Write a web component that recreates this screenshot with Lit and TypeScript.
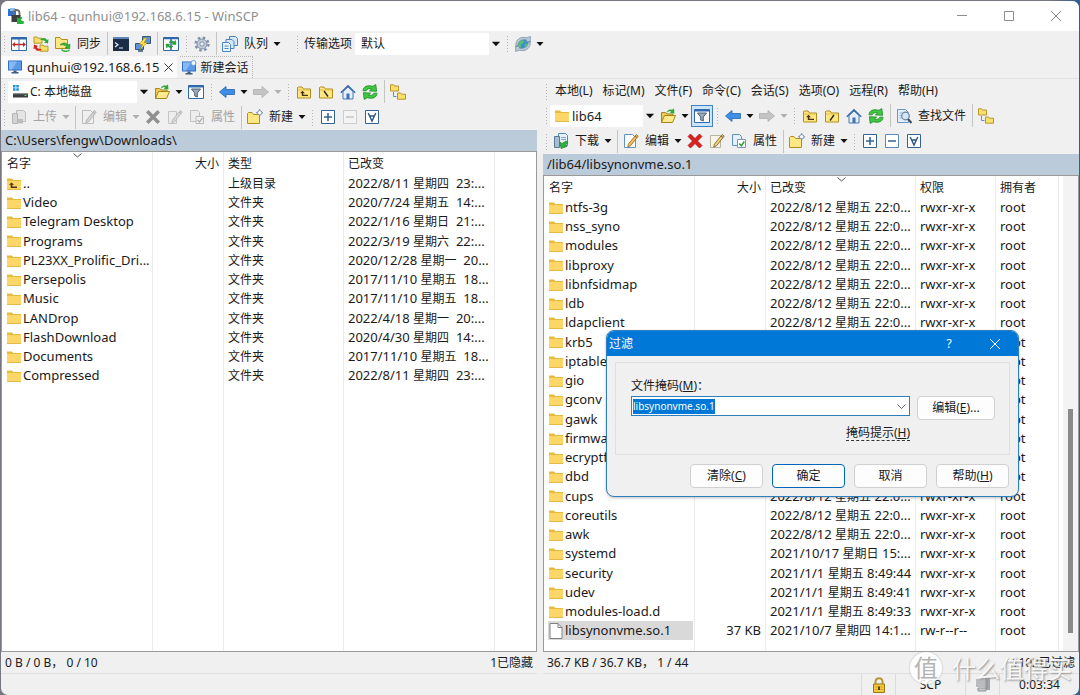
import { LitElement, html, svg, css, nothing, TemplateResult } from "lit";
import { customElement, property, query } from "lit/decorators.js";
import { classMap } from "lit/directives/class-map.js";

const folder = svg`<path d="M1 2.500h5l1.300 1.500H15v10H1z" fill="#e9b93c"/><path d="M1 5h14v9H1z" fill="#fcd667"/><path d="M1 13h14v1H1z" fill="#e8b84a"/>`;
const goldFolder = svg`<path d="M1.500 3.500v10.500h13v-9h-7l-1.500-2h-3.500z" fill="#ffe783" stroke="#b08d1e"/><path d="M2 6h12" stroke="#e3bd4a"/>`;
const smallFolder = (x: number, y: number) => svg`<path d="M${x} ${y}h3l1 1.200h4v5H${x}z" fill="#fbdf6b" stroke="#b08d1e" stroke-width=".9"/>`;
const sheet = (stroke: string, fill: string) => svg`<path d="M1.500 1.500h8l3 3v10h-11z" fill=${fill} stroke=${stroke}/>`;
const pencil = (body: string, dark: string) => svg`<path d="M13.200 1.500l2 1.600-7.600 9.600-2.800 1.400.6-3z" fill=${body} stroke=${dark} stroke-width=".8"/><path d="M12 3l2.200 1.700" stroke=${dark}/>`;
const monitor = svg`<path d="M1 1.500h14v10H1z" fill="#2f6fc4"/><path d="M2 2.500h12v8H2z" fill="#5b9ae6"/><path d="M2 2.500h8l-5 8H2z" fill="#86b8f2"/><path d="M6.500 11.500h3V13h2v1.500h-7V13h2z" fill="#41597a"/>`;
const boxed = (stroke: string, fill: string) => svg`<path d="M1.500 1.500h13v13h-13z" fill=${fill} stroke=${stroke}/>`;
const refreshHalf = svg`<path d="M1 6.800C1.300 2.500 5 .8 10.800 2.300L13.800.6 14.600 7.300 7.400 6.900 9.600 5C7 4.200 5 4.700 4.200 6.800z" fill="#43c644" stroke="#158a22" stroke-width=".8"/>`;

const ICONS: Record<string, TemplateResult> = {
  app: svg`<path d="M0 1h8v7H0z" fill="#2f6fd0"/><path d="M2 0h5v3H2z" fill="#8dc0f5"/><path d="M5.500 8V5c0-4 6-4 6 0v3" fill="none" stroke="#6d6d6d" stroke-width="1.800"/><path d="M3.500 7h9v7h-9z" fill="#3d3d3d"/><path d="M9 9l1.800 1.500L13 8.500l1.500 1.500-2 2L16 13.500 15.500 16H9z" fill="#22b53a"/>`,
  compare: svg`<path d="M.5 1.500h15v13H.5z" fill="#fff" stroke="#2f68ab"/><path d="M.5 2.500h15" stroke="#2f68ab" stroke-width="2"/><path d="M8 3v11" stroke="#2f68ab"/><path d="M1 8.500l3-2.500v1.800h8V6l3 2.500-3 2.500V9.300H4V11z" fill="#c62828"/>`,
  syncRed: svg`${smallFolder(1, 1)}${smallFolder(7, 9)}<path d="M7 4c3-3 6-2 7 0l1.500-.8-.5 4.300-4-1 1.500-1C11.500 4 9 4 7 4z" fill="#2fa83a"/><path d="M9 13c-3 3-6 2-7-.5L.5 13 1 8.500l4 1.500-1.300 1C4.500 13 7 13 9 13z" fill="#d32323"/>`,
  syncGreen: svg`<path d="M.5 1.500v11h12v-9h-6l-1.500-2z" fill="#ffe783" stroke="#b08d1e"/><path d="M5 9c2.500-3 6.500-2.500 8 0l2-1-.3 5-4.500-1.200 1.300-1C10 9 7.500 8.500 5 9z" fill="#35b23c" stroke="#147a1d" stroke-width=".5"/><path d="M14.500 14c-3 2-6 1.500-8-.5" fill="none" stroke="#35b23c" stroke-width="1.500"/>`,
  console: svg`<path d="M0 1h16v14H0z" fill="#1b2c45"/><path d="M0 1h16v2H0z" fill="#5b87bd"/><path d="M2 6.500l3 2.300-3 2.300M6 12h4" fill="none" stroke="#e8eef6" stroke-width="1.200"/>`,
  putty: svg`<path d="M7.500.5h8v7h-8z" fill="#5a93de" stroke="#395575"/><path d="M.5 7.500h8v6h-8z" fill="#5a93de" stroke="#395575"/><path d="M3 15h5" stroke="#395575" stroke-width="1.500"/><path d="M9.500 2L4 8.500h3.500L5 13.500l7.500-7H9l3-4.500z" fill="#ffe14a" stroke="#a88918" stroke-width=".6"/>`,
  syncBrowse: svg`<path d="M.5 1.500h15v13H.5z" fill="#fff" stroke="#2f68ab"/><path d="M.5 2.500h15M8 3v11" stroke="#2f68ab" stroke-width="1.500"/><path d="M6 6.500c1.500-2 3.500-2 5-.5l1.500-1.500.5 4-4-.3 1.200-1.200C9 6.200 7.500 6 6 6.500zM10 10c-1.500 2-3.500 2-5 .5L3.500 12 3 8l4 .3-1.200 1.200C7 10.500 8.500 10.500 10 10z" fill="#1f9d35" stroke="#1f9d35" stroke-width=".6"/>`,
  gear: svg`<circle cx="8" cy="8" r="6.500" fill="none" stroke="#8290a6" stroke-width="2.200" stroke-dasharray="2.600 2.500"/><circle cx="8" cy="8" r="5" fill="#c3cddd" stroke="#7f8ea6"/><circle cx="8" cy="8" r="2.200" fill="#f0f0f0" stroke="#7f8ea6"/>`,
  queue: svg`<path d="M7.500.5h6l2 2v7h-8z" fill="#d5e7f8" stroke="#4c86bd"/><path d="M4 3.500h6l2 2v7H4z" fill="#d5e7f8" stroke="#4c86bd"/><path d="M.5 6.500h6l2 2v7h-8z" fill="#e9f3fc" stroke="#4c86bd"/><path d="M2.500 10h4M2.500 12.500h4" stroke="#4c86bd"/>`,
  globe: svg`<circle cx="8" cy="8" r="6" fill="#3a8fd8"/><path d="M5 4c3-1 5 1 3.500 2.500S5 8 6 10s-1 3-2.500 1-.5-5 1.500-7zM10 8c2-1 4 0 3 2.500s-3 2.500-3.500 1.500z" fill="#58c46a"/><path d="M.8 11C0 4 5 0 11.500 1.800L15.500.5l-.3 5.500-4.700-.5 1.300-1.500C7 3 3 5 3 9.500zM15.200 5c.8 7-4.200 11-10.700 9.200L.5 15.500.8 10l4.700.5L4.200 12C9 13 13 11 13 6.500z" fill="#b9c9d8" stroke="#64809b" stroke-width=".6"/>`,
  monitor,
  newSession: svg`${monitor}<circle cx="12.500" cy="3" r="2.500" fill="#eef6ff" stroke="#6d9fd6"/>`,
  drive: svg`<path d="M1 1h2.500v2.500H1zM4.300 1h2.500v2.500H4.300zM1 4.300h2.500v2.500H1zM4.300 4.300h2.500v2.500H4.300z" fill="#1490e0"/><path d="M1 9h15v4.500H1z" fill="#3a3d40"/><path d="M1 9h15v1.200H1z" fill="#8a8d90"/><path d="M12.500 11.500h2" stroke="#6fe07a"/>`,
  folder,
  parent: svg`${folder}<path d="M5.500 6.500L3 8.700H4.700V12H11v-1.500H6.300V8.700H8z" fill="#4a3413"/>`,
  openFolder: svg`<path d="M1.500 14.500v-10h4l1.500 1.500h6v2" fill="#f0cc57" stroke="#a5841c"/><path d="M1.500 14.500l3-7h11l-3 7z" fill="#ffe98e" stroke="#a5841c"/><path d="M6.500 5C7.500 1.500 10 .8 12 1.800L14 .5l.5 5-4.700-.6 1.400-1.400C9.500 3 8 3.500 6.500 5z" fill="#2fa83a"/>`,
  filter: svg`<path d="M.5 1.500h15v13H.5z" fill="#fff" stroke="#2f68ab"/><path d="M.5 2.500h15" stroke="#2f68ab" stroke-width="2"/><path d="M3.500 5h9L9.300 9v4l-2.600-1V9z" fill="#9aa9bb" stroke="#4e6177"/>`,
  left: svg`<path d="M.5 8L7 2.500V5.500h8.500v5H7v3z" fill="#3d8ee8" stroke="#2462ad" stroke-width=".8"/>`,
  right: svg`<path d="M15.500 8L9 2.500V5.500H.5v5H9v3z" fill="#c4c4c4" stroke="#b0b0b0" stroke-width=".8"/>`,
  up: svg`${goldFolder}<path d="M6.500 6.800L4 9.200H5.800V12H12v-1.300H7.300V9.200H9z" fill="#4a3413"/>`,
  rootLocal: svg`${goldFolder}<path d="M6 7l4 5.500" stroke="#2e2a18" stroke-width="1.400"/>`,
  rootRemote: svg`${goldFolder}<path d="M10 7l-4 5.500" stroke="#2e2a18" stroke-width="1.400"/>`,
  home: svg`<path d="M3 7.500V15h10V7.500L8 3z" fill="#e4effb" stroke="#4878b0"/><path d="M.8 8.800L8 1.700l7.200 7.100" fill="none" stroke="#3c6dab" stroke-width="1.500"/><path d="M6.500 9.500h3V15h-3z" fill="#3f71b5"/>`,
  refresh: svg`${refreshHalf}<g transform="rotate(180 8 8)">${refreshHalf}</g>`,
  tree: svg`${smallFolder(.5, .8)}${smallFolder(7.500, 9)}<path d="M3.500 8v4.500h3" fill="none" stroke="#5d8dc4"/>`,
  upload: svg`<path d="M5.500 1.500h7l2 2v9h-9z" fill="#e4e4e4" stroke="#bcbcbc"/><path d="M1.500 4.500h5v10h-5z" fill="#d4d4d4" stroke="#b4b4b4"/><path d="M7 14.500V10h5v4.500z" fill="#bdbdbd"/>`,
  download: svg`<path d="M5.500.5h7l2 2v10h-9z" fill="#e8f1fb" stroke="#5584b5"/><path d="M1.500 3.500h5v11h-5z" fill="#a9bdd0" stroke="#587896"/><path d="M8 4.500h5M8 6.500h5" stroke="#7fa4ca"/><path d="M7 9l2 1.500 4-2.500 2 1.500-2.500 2.500 1.500 1.500-6 2z" fill="#2fb03c" stroke="#167a22" stroke-width=".6"/>`,
  editOff: svg`${sheet("#bdbdbd", "#f0f0f0")}${pencil("#d2d2d2", "#b0b0b0")}`,
  edit: svg`${sheet("#5e93c6", "#fff")}${pencil("#f5bd57", "#8d672a")}`,
  delOff: svg`<path d="M3.500 1L8 5.500 12.500 1 15 3.500 10.500 8l4.500 4.500-2.500 2.500L8 10.500 3.500 15 1 12.500 5.500 8 1 3.500z" fill="#909090"/>`,
  del: svg`<path d="M3.500 1L8 5.500 12.500 1 15 3.500 10.500 8l4.500 4.500-2.500 2.500L8 10.500 3.500 15 1 12.500 5.500 8 1 3.500z" fill="#dc2020" stroke="#9d1111" stroke-width=".7"/>`,
  renameOff: svg`<path d="M1.500 2.500h8v12h-8z" fill="#ededed" stroke="#c4c4c4"/>${pencil("#d8d8d8", "#b4b4b4")}`,
  rename: svg`<path d="M1.500 2.500h10v12h-10z" fill="#f8f4e8" stroke="#b9b4a0"/>${pencil("#f7cf6d", "#6d5c36")}`,
  propsOff: svg`<path d="M1.500 1.500h7l2 2v9h-9z" fill="#ededed" stroke="#c0c0c0"/><path d="M7 7.500h7.500v7H7z" fill="#f2f2f2" stroke="#b8b8b8"/><path d="M8.500 11l2 2 3-4" fill="none" stroke="#b0b0b0" stroke-width="1.300"/>`,
  props: svg`<path d="M1.500 1.500h7l2 2v9h-9z" fill="#e6f0fa" stroke="#5e8fbf"/><path d="M6.500 6.500h8v8h-8z" fill="#fff" stroke="#7d93a8"/><path d="M8.300 10.500l2 2.300 3-4.300" fill="none" stroke="#2aa338" stroke-width="1.500"/>`,
  newFolder: svg`<path d="M.5 4.500v10h12v-9h-6l-1.500-2h-3.500z" fill="#ffe783" stroke="#b08d1e"/><circle cx="12.700" cy="3.800" r="2.200" fill="#fff" stroke="#7a8ea8"/><path d="M12.700 0v1.500M12.700 6v1.500M9 3.800h1.500M15 3.800h1" stroke="#7a8ea8"/>`,
  plus: svg`${boxed("#336396", "#fff")}<path d="M4 8h8M8 4v8" stroke="#336396" stroke-width="1.600"/>`,
  minus: svg`${boxed("#5b89b8", "#fff")}<path d="M4 8h8" stroke="#336396" stroke-width="1.600"/>`,
  minusOff: svg`${boxed("#cdcdcd", "#f4f4f4")}<path d="M4 8h8" stroke="#c4c4c4" stroke-width="1.600"/>`,
  invert: svg`${boxed("#336396", "#fff")}<path d="M4.200 4L8 12l3.800-8M5.500 7h5" fill="none" stroke="#2b5485" stroke-width="1.400"/>`,
  find: svg`<path d="M1.500 1.500h8l3 3v10h-11z" fill="#e3eefa" stroke="#6a98c6"/><path d="M3.500 5h4M3.500 7.500h2M3.500 10h2" stroke="#8cb0d6"/><circle cx="9.500" cy="8" r="3.800" fill="#cfe5fa" fill-opacity=".9" stroke="#6a7f96" stroke-width="1.200"/><path d="M12 11l3.500 4" stroke="#3a4c60" stroke-width="2"/>`,
  file: svg`<path d="M2 .5h8l4 4v11H2z" fill="#fff" stroke="#808080"/><path d="M10 .5v4h4" fill="none" stroke="#808080"/>`,
  lock: svg`<path d="M4.500 8V5c0-5 7-5 7 0v3" fill="none" stroke="#b5973a" stroke-width="2"/><path d="M2.500 7h11v8.500h-11z" fill="#f3c843" stroke="#9a7817"/><path d="M3.500 10h9M3.500 12.500h9" stroke="#dca928"/><path d="M8 9.500v3.500" stroke="#5d470c" stroke-width="2"/>`,
  zip: svg`<path d="M1 2h9v8H1z" fill="#b9bcc0"/><path d="M10 1h5v12h-5z" fill="#a2a5a9"/><path d="M3 11h8v3H3zM12 3v9" stroke="#8f9296" fill="#c6c8cb"/>`,
};

const icon = (name: string) =>
  html`<svg class="icon" viewBox="0 0 16 16" width="16" height="16" aria-hidden="true">${ICONS[name]}</svg>`;

const caret = html`<svg class="caret" viewBox="0 0 12 6" width="12" height="6" aria-hidden="true"><path d="M2.500 1h7L6 5z" /></svg>`;

/* Han characters are set one pixel smaller than the Latin text around them. */
const mixed = (text: string) =>
  text.split(/([\u4e00-\u9fff]+)/).filter(Boolean).map((part) =>
    /[\u4e00-\u9fff]/.test(part) ? html`<span class="han">${part}</span>` : part);

interface Column { label: string; width?: number; cls?: string; sorted?: boolean; }
interface Row { icon: string; cells: string[]; selected?: boolean; }

@customElement("file-list")
class FileList extends LitElement {
  @property({ attribute: false }) columns: Column[] = [];
  @property({ attribute: false }) rows: Row[] = [];

  static styles = css`
    * { box-sizing: border-box; }
    :host { display: flex; flex-direction: column; min-width: 0; min-height: 0; overflow: hidden; background: #fff; }
    table { flex: none; width: 100%; border-collapse: separate; border-spacing: 0; table-layout: fixed; }
    th, td {
      padding: 0 4px; text-align: left; font-weight: 400; white-space: pre;
      overflow: hidden; border-right: 1px solid #ececec; line-height: 19px;
    }
    th { height: 22px; font-size: 12px; position: relative; }
    td { height: 19px; font-size: 13px; }
    tr:nth-child(4n) td { height: 20px; }
    th:last-child, td:last-child { border-right: 0; }
    .num { text-align: right; }
    .han { font-size: 12px; }
    td.name { padding: 0 1px 0 4px; }
    th.name { padding-left: 5px; }
    .label { display: flex; align-items: center; gap: 1px; height: 19px; }
    .selected .label { background: #d9d9d9; }
    .sort { position: absolute; top: 1px; left: 50%; margin-left: -4px; fill: none; stroke: #555; }
    .icon { flex: none; }
    .rest { flex: 1; display: flex; }
    .rest span { flex: none; border-right: 1px solid #ececec; }
  `;

  render() {
    return html`<table>
      <colgroup>${this.columns.map((c) => html`<col style=${c.width ? `width:${c.width}px` : ""} />`)}</colgroup>
      <thead><tr>${this.columns.map((c) => html`<th scope="col" class=${c.cls ?? ""}>${c.label}${c.sorted
        ? html`<svg class="sort" width="9" height="5" viewBox="0 0 9 5"><path d="M.5.5l4 3.500 4-3.500" /></svg>` : nothing}</th>`)}</tr></thead>
      <tbody>${this.rows.map((r) => html`<tr class=${classMap({ selected: !!r.selected })}>${r.cells.map((t, i) =>
        html`<td class=${this.columns[i].cls ?? ""}>${i === 0 ? html`<span class="label">${icon(r.icon)}<span>${t}</span></span>` : mixed(t)}</td>`)}<td></td></tr>`)}</tbody>
    </table>
    <div class="rest">${this.columns.filter((c) => c.width).map((c) => html`<span style=${`width:${c.width}px`}></span>`)}</div>`;
  }
}

const LOCAL_COLUMNS: Column[] = [
  { label: "名字", width: 151, cls: "name", sorted: true },
  { label: "大小", width: 71, cls: "num" },
  { label: "类型", width: 120 },
  { label: "已改变", width: 151 },
  { label: "" },
];
const LOCAL_ROWS: Row[] = ([
  ["..", "2022/8/11 星期四  23:..."],
  ["Video", "2020/7/24 星期五  14:..."],
  ["Telegram Desktop", "2022/1/16 星期日  21:..."],
  ["Programs", "2022/3/19 星期六  22:..."],
  ["PL23XX_Prolific_Dri...", "2020/12/28 星期一  20..."],
  ["Persepolis", "2017/11/10 星期五  18..."],
  ["Music", "2017/11/10 星期五  18..."],
  ["LANDrop", "2022/4/18 星期一  20:..."],
  ["FlashDownload", "2020/4/30 星期四  14:..."],
  ["Documents", "2017/11/10 星期五  18..."],
  ["Compressed", "2022/8/11 星期四  23:..."],
] as const).map(([name, date], i) => ({
  icon: i ? "folder" : "parent",
  cells: [name, "", i ? "文件夹" : "上级目录", date],
}));

const REMOTE_COLUMNS: Column[] = [
  { label: "名字", width: 151, cls: "name" },
  { label: "大小", width: 71, cls: "num" },
  { label: "已改变", width: 150, sorted: true },
  { label: "权限", width: 80 },
  { label: "拥有者", width: 63 },
  { label: "" },
];
const remote = (name: string, date: string): Row => ({ icon: "folder", cells: [name, "", date, "rwxr-xr-x", "root"] });
const REMOTE_ROWS: Row[] = [
  ...["ntfs-3g", "nss_syno", "modules", "libproxy", "libnfsidmap", "ldb", "ldapclient", "krb5", "iptables", "gio", "gconv",
    "gawk", "firmware", "ecryptfs", "dbd", "cups", "coreutils", "awk"].map((n) => remote(n, "2022/8/12 星期五 22:0...")),
  remote("systemd", "2021/10/17 星期日 15:..."),
  remote("security", "2021/1/1 星期五 8:49:44"),
  remote("udev", "2021/1/1 星期五 8:49:41"),
  remote("modules-load.d", "2021/1/1 星期五 8:49:33"),
  { icon: "file", cells: ["libsynonvme.so.1", "37 KB", "2021/10/7 星期四 14:1...", "rw-r--r--", "root"], selected: true },
];

const MENU = ["本地(L)", "标记(M)", "文件(F)", "命令(C)", "会话(S)", "选项(O)", "远程(R)", "帮助(H)"];

@customElement("app-root")
class AppRoot extends LitElement {
  @query("#mask") mask!: HTMLInputElement;

  static styles = css`
    * { box-sizing: border-box; }
    :host {
      box-sizing: border-box; display: block; height: 100vh; padding: 1px 1px 0; position: relative; overflow: hidden;
      background: linear-gradient(90deg, #77777f 0, #77777f 97%, #2f5f92 100%);
      font: 12px/16px "Noto Sans", "Noto Sans CJK SC", sans-serif; color: #1a1a1a;
    }
    button, input, select { font: inherit; color: inherit; margin: 0; padding: 0; border: 0; background: none; appearance: none; }
    a { color: inherit; }
    .window {
      height: 100%; display: flex; flex-direction: column; background: #f0f0f0;
      border-radius: 7px; overflow: hidden;
    }
    .titlebar { flex: none; height: 30px; display: flex; align-items: center; background: #fff; padding-left: 7px; }
    .title { flex: 1; margin: 0; padding-left: 4px; font-size: 13px; font-weight: 400; color: #8f8f8f; }
    .caption { width: 47px; height: 30px; display: grid; place-items: center; }
    .caption svg { fill: none; stroke: #8c8c8c; }

    .toolbar { flex: none; height: 25px; display: flex; align-items: center; min-width: 0; }
    .tall { height: 26px; }
    .grip { flex: none; width: 9px; height: 17px; display: flex; justify-content: center; }
    .grip:first-child { width: 7px; }
    .grip::before { content: ""; width: 3px; background: radial-gradient(circle, #b4b4b4 1px, transparent 1px) 0 0 / 3px 3px; }
    .gap { margin-left: 10px; }
    .sep { flex: none; width: 6px; height: 23px; display: flex; justify-content: center; }
    .sep::before { content: ""; width: 1px; background: #c4c4c4; }
    .tool { flex: none; height: 22px; min-width: 22px; display: flex; align-items: center; justify-content: center; }
    .tool.text { padding: 0 3px; justify-content: flex-start; gap: 6px; }
    .tool:disabled { color: #a3a3a3; }
    .tool.on { background: #cce4f7; outline: 1px solid #3c82c4; outline-offset: -1px; }
    .drop { flex: none; width: 12px; height: 22px; display: grid; place-items: center; }
    .caret { fill: #111; }
    .drop:disabled .caret { fill: #b0b0b0; }
    .field { display: flex; align-items: center; height: 22px; background: #fff; padding-left: 4px; }
    .field select { flex: 1; min-width: 0; height: 22px; padding-left: 2px; }
    .field .caret { pointer-events: none; background: #f0f0f0; height: 22px; width: 14px; flex: none; }
    .preset { width: 148px; }
    .local { width: 143px; }
    .remote { width: 107px; font-size: 13px; }
    .preset-label { padding: 0 3px 0 2px; }

    .tabs { flex: none; height: 23px; display: flex; align-items: flex-start; gap: 3px; border-bottom: 1px solid #e2e2e2; }
    .tab { height: 22px; display: flex; align-items: center; gap: 4px; padding: 0 4px 0 6px; }
    .tab.active { background: #fafafa; font-size: 13px; }
    .tab.other { border: 1px dotted #b8b8b8; border-width: 1px 1px 0 0; padding: 0 3px 0 1px; }
    .close { display: grid; place-items: center; }
    .close svg { fill: none; stroke: #333; }

    .panes { flex: 1; min-height: 0; display: grid; grid-template-columns: 1fr 1fr; gap: 6px; }
    .pane { display: flex; flex-direction: column; min-width: 0; min-height: 0; }
    .path { flex: none; height: 21px; padding: 0 4px; background: #bccbd9; line-height: 20px; font-size: 13px; }
    .list-box { flex: 1; min-height: 0; display: flex; background: #fff; border: 1px solid #9a9a9a; }
    .list-box file-list { flex: 1; }
    .scroll { flex: none; width: 15px; background: #f3f3f3; display: flex; flex-direction: column; padding: 0 5px 18px; justify-content: flex-end; }
    .thumb { height: 49%; background: #8a8a8a; }
    .count { flex: none; height: 22px; display: flex; justify-content: space-between; align-items: center; padding: 0 4px; white-space: pre; border-bottom: 1px solid #e0e0e0; }
    .menu { flex: none; height: 24px; display: flex; align-items: center; }
    .menu button { padding: 0 5px; height: 22px; white-space: nowrap; }

    .status { flex: none; height: 21px; display: flex; justify-content: flex-end; }
    .cell { display: flex; align-items: center; justify-content: center; border-left: 1px solid #dcdcdc; }
    .narrow { width: 34px; }
    .mid { width: 70px; }
    .wide { width: 80px; }

    .dialog {
      position: absolute; left: 606px; top: 330px; width: 413px; background: #f0f0f0;
      border: 1px solid #2f7fbd; border-radius: 8px; overflow: hidden;
      box-shadow: 0 1px 3px rgba(0, 0, 0, .25);
    }
    .dialog-head { height: 25px; display: flex; align-items: center; background: #0078d7; color: #fff; padding-left: 2px; }
    .dialog-head h2 { flex: 1; margin: 0; font-size: 12px; font-weight: 400; }
    .dialog-head button { width: 46px; height: 25px; display: grid; place-items: center; }
    .dialog-head svg { fill: none; stroke: #fff; }
    .group {
      margin: 6px 8px 0; padding: 15px 14px 13px 15px; border: 1px solid #dfdfdf; display: grid;
      grid-template-columns: 1fr 78px; column-gap: 7px; row-gap: 2px; align-items: start;
    }
    .group label { grid-column: 1 / 3; }
    .combo { display: flex; align-items: center; height: 20px; background: #fff; border: 1px solid #2f7fbd; }
    .combo input { flex: 1; min-width: 0; height: 15px; padding-left: 1px; font-size: 10px; outline: none; }
    .combo input::selection { background: #0078d7; color: #fff; }
    .combo button { width: 16px; height: 17px; display: grid; place-items: center; }
    .combo svg { fill: none; stroke: #666; }
    .push { height: 24px; background: #fdfdfd; border: 1px solid #d0d0d0; border-radius: 4px; }
    .push.primary { border: 1px solid #0067b8; }
    .hint { justify-self: end; text-decoration: none; border-bottom: 1px dashed #333; line-height: 15px; margin-top: 3px; }
    .actions { display: grid; grid-template-columns: repeat(4, 73px); justify-content: end; gap: 9px; padding: 9px 9px 8px; }

    .watermark {
      position: absolute; right: 8px; bottom: 11px; display: flex; align-items: center; gap: 10px;
      color: rgba(255, 255, 255, .9); font: 24px/32px "Noto Sans CJK SC", sans-serif; text-shadow: 1px 1px 2px #8c8c8c;
      pointer-events: none;
    }
    .seal {
      width: 32px; height: 32px; border-radius: 50%; background: rgba(255, 255, 255, .85); text-align: center;
      color: #b4b4b4; text-shadow: none; line-height: 30px; box-shadow: 0 0 2px #aaa;
    }
  `;

  firstUpdated() {
    this.mask.focus();
    this.mask.select();
  }

  private grip(cls = "") { return html`<span class="grip ${cls}"></span>`; }
  private sep() { return html`<span class="sep"></span>`; }

  private tool(name: string, label: string, opts: { off?: boolean; on?: boolean; text?: boolean } = {}) {
    return html`<button class=${classMap({ tool: true, text: !!opts.text, on: !!opts.on })} ?disabled=${!!opts.off} aria-label=${label}>
      ${icon(name)}${opts.text ? html`<span>${label}</span>` : nothing}</button>`;
  }

  private drop(label: string, off = false) {
    return html`<button class="drop" aria-label=${label} ?disabled=${off}>${caret}</button>`;
  }

  private navigation(root: string) {
    return html`
      ${this.grip()}${this.tool("left", "后退")}${this.drop("后退历史")}
      ${this.tool("right", "前进", { off: true })}${this.drop("前进历史", true)}
      ${this.grip()}${this.tool("up", "上级目录")}${this.tool(root, "根目录")}${this.tool("home", "主目录")}${this.tool("refresh", "刷新")}${this.sep()}`;
  }

  private fileTools(transfer: string, transferLabel: string, off: boolean) {
    return html`<div class="toolbar tall">
      ${this.grip()}${this.tool(transfer, transferLabel, { off, text: true })}${this.drop("传输方式", off)}${this.sep()}
      ${this.tool(off ? "editOff" : "edit", "编辑", { off, text: true })}${this.drop("编辑方式", off)}
      ${this.tool(off ? "delOff" : "del", "删除", { off })}${this.tool(off ? "renameOff" : "rename", "重命名", { off })}
      ${this.tool(off ? "propsOff" : "props", "属性", { off, text: true })}${this.sep()}
      ${this.tool("newFolder", "新建", { text: true })}${this.drop("新建项目")}
      ${this.grip()}${this.tool("plus", "选择")}${this.tool(off ? "minusOff" : "minus", "取消选择", { off })}${this.tool("invert", "反选")}
    </div>`;
  }

  render() {
    return html`
      <main class="window">
        <header class="titlebar">
          ${icon("app")}
          <h1 class="title">lib64 - qunhui@192.168.6.15 - WinSCP</h1>
          <button class="caption" aria-label="最小化"><svg width="10" height="10"><path d="M0 4.500h10" /></svg></button>
          <button class="caption" aria-label="最大化"><svg width="10" height="10"><path d="M.5.5h9v9h-9z" /></svg></button>
          <button class="caption" aria-label="关闭"><svg width="10" height="10"><path d="M0 0l10 10M10 0L0 10" /></svg></button>
        </header>

        <div class="toolbar">
          ${this.grip()}${this.tool("compare", "比较目录")}${this.tool("syncRed", "同步浏览")}${this.tool("syncGreen", "同步", { text: true })}${this.sep()}
          ${this.tool("console", "打开终端")}${this.tool("putty", "PuTTY")}${this.sep()}${this.tool("syncBrowse", "保持同步")}
          ${this.grip()}${this.tool("gear", "选项")}${this.sep()}${this.tool("queue", "队列", { text: true })}${this.drop("队列选项")}
          ${this.grip("gap")}<label class="preset-label" for="preset">传输选项</label>
          <span class="field preset"><select id="preset"><option>默认</option></select>${caret}</span>
          ${this.grip()}${this.tool("globe", "更新")}${this.drop("更新选项")}
        </div>

        <nav class="tabs">
          <div class="tab active">${icon("monitor")}<span>qunhui@192.168.6.15</span>
            <button class="close" aria-label="关闭会话"><svg width="9" height="9"><path d="M.5.5l8 8M8.500.5l-8 8" /></svg></button></div>
          <button class="tab other">${icon("newSession")}<span>新建会话</span></button>
        </nav>

        <div class="panes">
          <section class="pane">
            <div class="toolbar">
              ${this.grip()}
              <span class="field local">${icon("drive")}<select aria-label="驱动器"><option>C: 本地磁盘</option></select>${caret}</span>
              ${this.tool("openFolder", "打开目录")}${this.drop("目录书签")}${this.tool("filter", "过滤")}
              ${this.navigation("rootLocal")}${this.tool("tree", "目录树")}
            </div>
            ${this.fileTools("upload", "上传", true)}
            <div class="path">C:\\Users\\fengw\\Downloads\\</div>
            <div class="list-box"><file-list .columns=${LOCAL_COLUMNS} .rows=${LOCAL_ROWS}></file-list></div>
            <div class="count"><span>0 B / 0 B， 0 / 10</span><span>1已隐藏</span></div>
          </section>

          <section class="pane">
            <nav class="menu">${this.grip()}${MENU.map((m) => html`<button>${m}</button>`)}</nav>
            <div class="toolbar">
              ${this.grip()}
              <span class="field remote">${icon("folder")}<select aria-label="远程目录"><option>lib64</option></select>${caret}</span>
              ${this.tool("openFolder", "打开目录")}${this.drop("目录书签")}${this.tool("filter", "过滤", { on: true })}
              ${this.navigation("rootRemote")}${this.tool("find", "查找文件", { text: true })}${this.sep()}${this.tool("tree", "目录树")}
            </div>
            ${this.fileTools("download", "下载", false)}
            <div class="path">/lib64/libsynonvme.so.1</div>
            <div class="list-box">
              <file-list .columns=${REMOTE_COLUMNS} .rows=${REMOTE_ROWS}></file-list>
              <div class="scroll"><div class="thumb"></div></div>
            </div>
            <div class="count"><span>36.7 KB / 36.7 KB， 1 / 44</span><span>1102已过滤</span></div>
          </section>
        </div>

        <footer class="status">
          <span class="cell narrow">${icon("lock")}</span>
          <span class="cell mid">SCP</span>
          <span class="cell narrow">${icon("zip")}</span>
          <span class="cell wide">0:03:34</span>
        </footer>
      </main>

      <section class="dialog" role="dialog" aria-labelledby="dialog-title">
        <header class="dialog-head">
          <h2 id="dialog-title">过滤</h2>
          <button aria-label="帮助">?</button>
          <button aria-label="关闭"><svg width="10" height="10"><path d="M0 0l10 10M10 0L0 10" /></svg></button>
        </header>
        <div class="group">
          <label for="mask">文件掩码(<u>M</u>)：</label>
          <div class="combo"><input id="mask" type="text" value="libsynonvme.so.1" />
            <button aria-label="历史记录"><svg width="9" height="5"><path d="M.5.5l4 4 4-4" /></svg></button></div>
          <button class="push">编辑(<u>E</u>)...</button>
          <a class="hint" href="#mask">掩码提示(<u>H</u>)</a>
        </div>
        <div class="actions">
          <button class="push">清除(<u>C</u>)</button>
          <button class="push primary">确定</button>
          <button class="push">取消</button>
          <button class="push">帮助(<u>H</u>)</button>
        </div>
      </section>

      <div class="watermark"><span class="seal">值</span><span>什么值得买</span></div>
    `;
  }
}
